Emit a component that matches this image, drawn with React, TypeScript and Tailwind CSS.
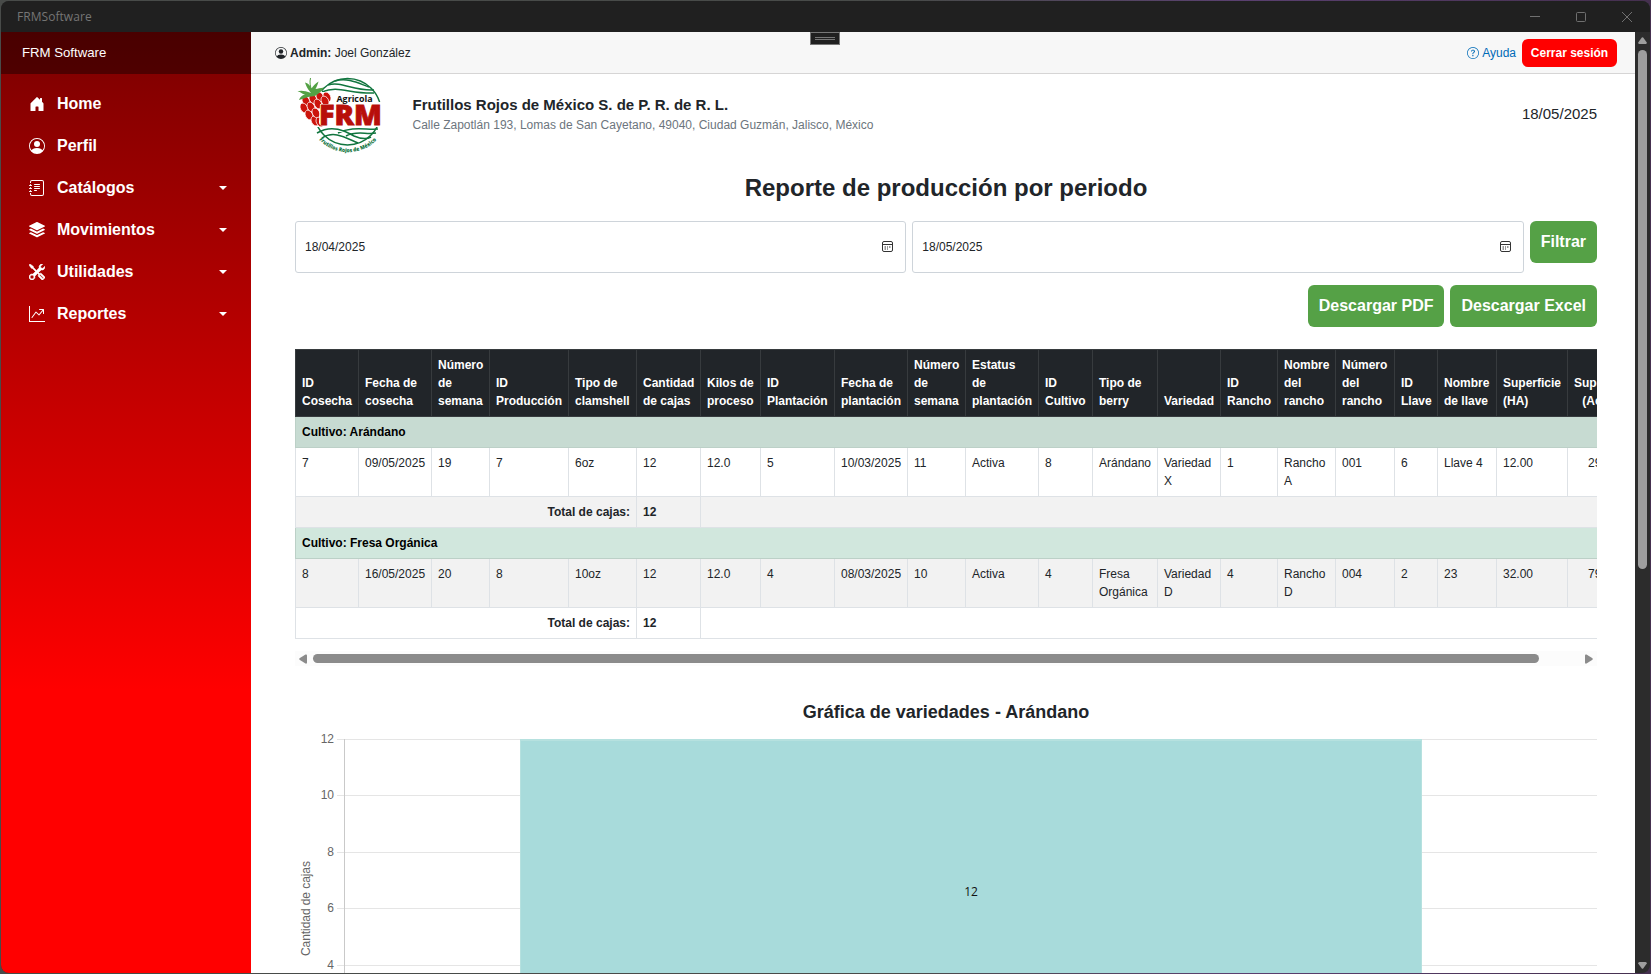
import React from "react";
import {
  BsGraphUpArrow,
  BsHouseDoorFill,
  BsJournalText,
  BsPersonCircle,
  BsQuestionCircle,
  BsStack,
  BsTools,
} from "react-icons/bs";

const navItems = [
  { label: "Home", Icon: BsHouseDoorFill, menu: false, heavy: false },
  { label: "Perfil", Icon: BsPersonCircle, menu: false, heavy: false },
  { label: "Catálogos", Icon: BsJournalText, menu: true, heavy: false },
  { label: "Movimientos", Icon: BsStack, menu: true, heavy: false },
  { label: "Utilidades", Icon: BsTools, menu: true, heavy: true },
  { label: "Reportes", Icon: BsGraphUpArrow, menu: true, heavy: false },
];

const columns: { title: string[]; width: number }[] = [
  { title: ["ID", "Cosecha"], width: 64 },
  { title: ["Fecha de", "cosecha"], width: 73 },
  { title: ["Número", "de", "semana"], width: 58 },
  { title: ["ID", "Producción"], width: 79 },
  { title: ["Tipo de", "clamshell"], width: 68 },
  { title: ["Cantidad", "de cajas"], width: 64 },
  { title: ["Kilos de", "proceso"], width: 60 },
  { title: ["ID", "Plantación"], width: 74 },
  { title: ["Fecha de", "plantación"], width: 73 },
  { title: ["Número", "de", "semana"], width: 58 },
  { title: ["Estatus", "de", "plantación"], width: 73 },
  { title: ["ID", "Cultivo"], width: 54 },
  { title: ["Tipo de", "berry"], width: 65 },
  { title: ["Variedad"], width: 63 },
  { title: ["ID", "Rancho"], width: 57 },
  { title: ["Nombre", "del", "rancho"], width: 58 },
  { title: ["Número", "del", "rancho"], width: 59 },
  { title: ["ID", "Llave"], width: 43 },
  { title: ["Nombre", "de llave"], width: 59 },
  { title: ["Superficie", "(HA)"], width: 71 },
  { title: ["Superficie", "(Acres)"], width: 71 },
];

const tableWidth = columns.reduce((sum, c) => sum + c.width, 0);

const groups = [
  {
    crop: "Arándano",
    head: "bg-[#c7dbd2]",
    row: "bg-white",
    total: "bg-[#f2f2f2]",
    cells: ["7", "09/05/2025", "19", "7", "6oz", "12", "12.0", "5", "10/03/2025", "11", "Activa", "8", "Arándano", "Variedad X", "1", "Rancho A", "001", "6", "Llave 4", "12.00", "29.65"],
  },
  {
    crop: "Fresa Orgánica",
    head: "bg-[#d1e7dd]",
    row: "bg-[#f2f2f2]",
    total: "bg-white",
    cells: ["8", "16/05/2025", "20", "8", "10oz", "12", "12.0", "4", "08/03/2025", "10", "Activa", "4", "Fresa Orgánica", "Variedad D", "4", "Rancho D", "004", "2", "23", "32.00", "79.07"],
  },
];

function Logo() {
  const berries = [
    [306, 101], [304, 108], [309, 115], [313, 99], [311, 107], [315, 121],
    [320, 97], [327, 97], [318, 104], [316, 113], [325, 101], [320, 122],
  ];
  return (
    <svg viewBox="295 74 90 84" className="h-[84px] w-[90px] shrink-0">
      <defs>
        <clipPath id="top">
          <path d="M314 74H382V102H379L334 92L322 92Z" />
        </clipPath>
        <clipPath id="bottom">
          <rect x="312" y="127" width="70" height="22" />
        </clipPath>
        <path id="motto" d="M318.500 139A39.500 39.500 0 0 0 377.500 139" />
      </defs>
      <g fill="none" stroke="#11753f" strokeWidth="1.5">
        <g clipPath="url(#top)">
          <circle cx="347.5" cy="112" r="33.5" />
          <path d="M322 92C338 85 350 94 374 93M328 85C342 81 352 91 374 90M335 81C348 77 360 84 369 87" />
        </g>
        <g clipPath="url(#bottom)">
          <circle cx="347.5" cy="112" r="33" />
          <path d="M317 133C332 124 345 131 354 136C361 139 366 140 371 137M322 138C334 130 346 138 358 143M338 133C352 126 366 130 378 129M346 136C357 130 366 135 376 133" />
        </g>
      </g>
      <g fill="#cc140c" stroke="#fff" strokeWidth="0.7">
        {berries.map(([x, y], i) => (
          <ellipse key={i} cx={x} cy={y} rx="3.6" ry="5.2" transform={`rotate(-28 ${x} ${y})`} />
        ))}
      </g>
      <path
        d="M311 93C305 91 301 90 297.500 91.500C301 92 302 94 305 94.500C302 95.500 300 97 299 100C304 99 307 97 311 96.500C316 97 321 92 324 87.500C320 88 318 88.500 315.500 89C317 86 318 84 318.500 81.500C315 84 313 86 311.500 88.500C310 85 308 83.500 305 82.500C306 85 306.500 87.500 311 93Z"
        fill="#53a144"
      />
      <path d="M312 91C310 86 309.500 82 310.500 78" fill="none" stroke="#53a144" strokeWidth="1" />
      <path d="M320 104H381V126H323Q319 126 319 122Z" fill="#fff" />
      <text
        x="336.5"
        y="101.500"
        textLength="36"
        lengthAdjust="spacingAndGlyphs"
        fill="#111"
        className="font-['Open_Sans'] text-[9px] font-bold"
      >
        Agricola
      </text>
      <text
        x="319"
        y="124.500"
        textLength="63"
        lengthAdjust="spacingAndGlyphs"
        fill="#b80f0a"
        stroke="#b80f0a"
        strokeWidth="0.8"
        className="font-['Open_Sans'] text-[28px] font-extrabold"
      >
        FRM
      </text>
      <text fill="#11753f" className="font-['Open_Sans'] text-[5.5px] font-extrabold">
        <textPath href="#motto" startOffset="1" textLength="64" lengthAdjust="spacingAndGlyphs">
          Frutillos Rojos de México
        </textPath>
      </text>
    </svg>
  );
}

function CalendarIcon() {
  return (
    <svg viewBox="0 0 12 12" className="size-3" fill="none" stroke="#333" strokeWidth="1">
      <rect x="0.5" y="0.5" width="10" height="10" rx="1.500" />
      <path d="M0.500 3.500H10.500" />
      <path d="M2.500 6H4M5 6H6M7 6H8.500M2.500 8H4M5 8H6" />
    </svg>
  );
}

function DateField({ value }: { value: string }) {
  return (
    <div className="flex h-[52px] flex-1 items-center justify-between rounded-[3px] border border-[#ced4da] pr-[11px] pl-[9px] text-xs">
      <span>{value}</span>
      <CalendarIcon />
    </div>
  );
}

function GreenButton({ children }: { children: React.ReactNode }) {
  return (
    <button className="h-[42px] rounded-md bg-[#55a146] px-[11px] text-base leading-6 font-bold whitespace-nowrap text-white">
      {children}
    </button>
  );
}

function ProductionTable() {
  const line = "border-r border-b border-[#dee2e6] first:border-l";
  return (
    <table
      className="table-fixed border-separate border-spacing-0 text-left text-xs leading-[18px]"
      style={{ width: tableWidth }}
    >
      <colgroup>
        {columns.map((c, i) => (
          <col key={i} style={{ width: c.width }} />
        ))}
      </colgroup>
      <thead>
        <tr className="h-[68px] bg-[#212529] text-white">
          {columns.map((c, i) => (
            <th
              key={i}
              className="border-t border-r border-b border-[#373b3e] px-1.5 py-1.5 align-bottom font-bold whitespace-nowrap first:border-l last:text-center"
            >
              {c.title.map((t) => (
                <div key={t}>{t}</div>
              ))}
            </th>
          ))}
        </tr>
      </thead>
      <tbody>
        {groups.map((g) => (
          <React.Fragment key={g.crop}>
            <tr className={g.head}>
              <td colSpan={21} className="h-[31px] border-b border-l border-[#bcd0c7] px-1.5 py-0 font-bold text-black">
                Cultivo: {g.crop}
              </td>
            </tr>
            <tr className={g.row}>
              {g.cells.map((v, i) => (
                <td key={i} className={`${line} h-[49px] px-1.5 pt-1.5 pb-0 align-top last:text-center`}>
                  {v}
                </td>
              ))}
            </tr>
            <tr className={`${g.total} font-bold`}>
              <td colSpan={5} className={`${line} h-[31px] px-1.5 py-0 text-right`}>
                Total de cajas:
              </td>
              <td className={`${line} px-1.5 py-0`}>12</td>
              <td colSpan={15} className={line} />
            </tr>
          </React.Fragment>
        ))}
      </tbody>
    </table>
  );
}

function VarietyChart() {
  const ticks = [
    { v: 12, y: 9 },
    { v: 10, y: 65 },
    { v: 8, y: 122 },
    { v: 6, y: 178 },
    { v: 4, y: 235 },
  ];
  return (
    <svg viewBox="0 0 1302 243" className="h-[243px] w-[1302px] text-xs" shapeRendering="crispEdges">
      {ticks.map((t) => (
        <g key={t.v}>
          <rect x="42" y={t.y} width="1260" height="1" fill="#e5e5e5" />
          <text x="39" y={t.y + 4} textAnchor="end" fill="#666">
            {t.v}
          </text>
        </g>
      ))}
      <rect x="49" y="9" width="1" height="234" fill="#c9c9c9" />
      <rect x="225" y="9" width="902" height="234" fill="#b6e1df" />
      <rect x="226" y="11" width="900" height="232" fill="#a8dbdb" />
      <text x="676" y="166" textAnchor="middle" fill="#111" className="font-['Open_Sans']">
        12
      </text>
      <text transform="translate(15 178.5) rotate(-90)" textAnchor="middle" fill="#666" textLength="95">
        Cantidad de cajas
      </text>
    </svg>
  );
}

export default function App() {
  return (
    <div className="h-[974px] w-[1651px] overflow-hidden bg-linear-to-r from-[#484b49] from-55% via-[#5a4070] via-75% to-[#45304f] p-px font-['Liberation_Sans',Arial,sans-serif] text-[#212529]">
      <div className="flex h-[972px] flex-col overflow-hidden rounded-lg bg-[#2c2c2c]">
        <div className="flex h-[31px] shrink-0 items-center justify-between bg-[#202020] pr-[17px] pl-4">
          <span className="font-['Open_Sans'] text-xs tracking-[0.05px] text-[#757575]">FRMSoftware</span>
          <svg viewBox="0 0 104 12" className="h-3 w-[104px]" fill="none" stroke="#707070">
            <path d="M1 5.500H11" />
            <rect x="47.500" y="1.500" width="9" height="9" rx="1" />
            <path d="M93 1L103 11M103 1L93 11" />
          </svg>
        </div>

        <div className="flex min-h-0 flex-1">
          <aside className="w-[250px] shrink-0 bg-linear-to-b/srgb from-[#7b0000] to-[#ff0000] to-70% text-white">
            <div className="flex h-[42px] items-center bg-black/40 pl-[21px] text-[13.2px]">FRM Software</div>
            <nav className="flex flex-col pt-[9px]">
              {navItems.map(({ label, Icon, menu, heavy }) => (
                <a key={label} className="flex h-[42px] items-center pr-6 pl-7">
                  <Icon className={heavy ? "size-4 stroke-white stroke-[0.5px]" : "size-4"} />
                  <span className="flex-1 pl-3 text-base leading-6 font-bold">{label}</span>
                  {menu && (
                    <svg viewBox="0 0 8 4" className="h-1 w-2" fill="currentColor">
                      <path d="M0 0H8L4 4Z" />
                    </svg>
                  )}
                </a>
              ))}
            </nav>
          </aside>

          <div className="relative flex w-[1384px] shrink-0 flex-col bg-white">
            <div className="absolute top-0 left-[559px] flex h-[13px] w-[30px] flex-col items-center gap-px border border-[#777] bg-[#202020] pt-1">
              <span className="h-px w-5 bg-[#777]" />
              <span className="h-px w-5 bg-[#777]" />
            </div>

            <header className="flex h-[42px] shrink-0 items-center justify-between border-b border-[#d6d5d5] bg-[#f7f7f7] pr-[18px] pl-6 text-xs">
              <div className="flex items-center gap-[3px]">
                <BsPersonCircle className="size-3" />
                <span>
                  <b>Admin:</b> Joel González
                </span>
              </div>
              <div className="flex items-center">
                <a className="flex items-center gap-[3px] text-[#006bb7]">
                  <BsQuestionCircle className="size-3" />
                  Ayuda
                </a>
                <button className="ml-1.5 h-7 w-[95px] rounded-md bg-[#ff0000] font-bold whitespace-nowrap text-white">
                  Cerrar sesión
                </button>
              </div>
            </header>

            <main className="min-h-0 flex-1 overflow-hidden pr-[38px] pl-11">
              <div className="flex h-[84px]">
                <Logo />
                <div className="pt-[21px] pl-[27.500px]">
                  <h5 className="text-[15px] leading-5 font-bold">Frutillos Rojos de México S. de P. R. de R. L.</h5>
                  <p className="text-xs leading-5 text-[#6c757d]">
                    Calle Zapotlán 193, Lomas de San Cayetano, 49040, Ciudad Guzmán, Jalisco, México
                  </p>
                </div>
                <span className="ml-auto pt-[30px] text-[15px] leading-5">18/05/2025</span>
              </div>

              <h1 className="mt-4 h-[47px] text-center text-2xl leading-7 font-bold">
                Reporte de producción por periodo
              </h1>

              <div className="flex gap-1.5">
                <DateField value="18/04/2025" />
                <DateField value="18/05/2025" />
                <GreenButton>Filtrar</GreenButton>
              </div>
              <div className="mt-3 flex justify-end gap-1.5">
                <GreenButton>Descargar PDF</GreenButton>
                <GreenButton>Descargar Excel</GreenButton>
              </div>

              <div className="mt-[22px] h-[302px] overflow-hidden">
                <ProductionTable />
              </div>
              <div className="flex h-[15px] items-center bg-[#fcfcfc] pr-1 pl-1">
                <svg viewBox="0 0 8 10" className="h-[10px] w-2" fill="#8b8b8b">
                  <path d="M0.500 4.200L6.500 0.500Q8 0 8 1.500V8.500Q8 10 6.500 9.500L0.500 5.800Q0 5 0.500 4.200Z" />
                </svg>
                <div className="ml-1.5 h-[9px] w-[1226px] rounded-full bg-[#8b8b8b]" />
                <svg viewBox="0 0 8 10" className="ml-auto h-[10px] w-2" fill="#8b8b8b">
                  <path d="M7.500 4.200L1.500 0.500Q0 0 0 1.500V8.500Q0 10 1.500 9.500L7.500 5.800Q8 5 7.500 4.200Z" />
                </svg>
              </div>

              <h3 className="mt-[34px] h-[30px] text-center text-lg leading-6 font-bold">
                Gráfica de variedades - Arándano
              </h3>
              <VarietyChart />
            </main>
          </div>

          <div className="flex flex-1 flex-col items-center pt-[5px] pb-1">
            <svg viewBox="0 0 9 7" className="h-[7px] w-[9px] shrink-0" fill="#9e9e9e">
              <path d="M3.800 0.500Q4.500 0 5.200 0.500L8.800 5.500Q9 7 7.500 7H1.500Q0 7 0.200 5.500Z" />
            </svg>
            <div className="mt-1.5 h-[519px] w-[9px] rounded-full bg-[#9e9e9e]" />
            <svg viewBox="0 0 9 7" className="mt-auto h-[7px] w-[9px] shrink-0" fill="#9e9e9e">
              <path d="M3.800 6.500Q4.500 7 5.200 6.500L8.800 1.500Q9 0 7.500 0H1.500Q0 0 0.200 1.500Z" />
            </svg>
          </div>
        </div>
      </div>
    </div>
  );
}
